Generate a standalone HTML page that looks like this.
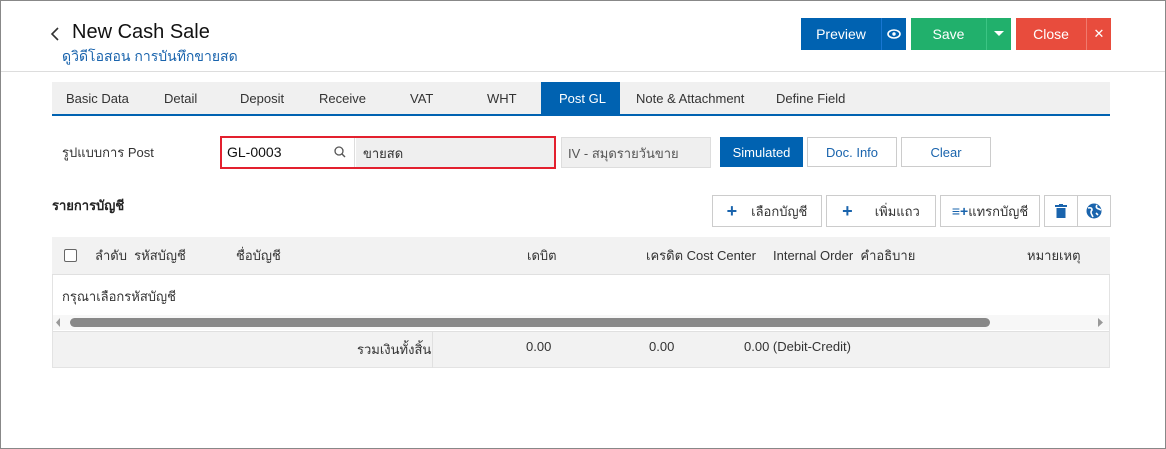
<!DOCTYPE html>
<html><head><meta charset="utf-8"><style>
*{box-sizing:border-box;margin:0;padding:0}
body{width:1166px;height:449px;background:#fff;font-family:"Liberation Sans","Noto Sans CJK SC",sans-serif;font-size:13px;color:#333;position:relative;overflow:hidden}
.frame{position:absolute;left:0;top:0;width:1166px;height:449px;border:1px solid #888}
.a{position:absolute}
.btn{position:absolute;display:flex;align-items:center;justify-content:center;color:#fff;font-size:14px}
.wb{position:absolute;border:1px solid #ccc;background:#fff;display:flex;align-items:center;justify-content:center;color:#1a64ad;font-size:13px}
.tab{position:absolute;top:82px;height:34px;line-height:34px;font-size:13px;color:#333}
</style></head><body>
<div class="frame"></div>
<svg class="a" style="left:50px;top:27px" width="10" height="14"><path d="M8 1 L2 7 L8 13" stroke="#333" stroke-width="1.6" fill="none"/></svg>
<div class="a" style="left:72px;top:21px;font-size:20px;color:#111">New Cash Sale</div>
<div class="a" style="left:62px;top:46px;font-size:14px;color:#1a64ad">ดูวิดีโอสอน การบันทึกขายสด</div>
<div class="a" style="left:1px;top:71px;width:1164px;height:1px;background:#ddd"></div>

<div class="btn" style="left:801px;top:18px;width:80px;height:32px;background:#0062b1">Preview</div>
<div class="btn" style="left:881px;top:18px;width:25px;height:32px;background:#0062b1;border-left:1px solid #1976d2"><svg width="14" height="10"><ellipse cx="7" cy="5" rx="6" ry="4" fill="none" stroke="#fff" stroke-width="1.6"/><circle cx="7" cy="5" r="1.7" fill="#fff"/></svg></div>
<div class="btn" style="left:911px;top:18px;width:75px;height:32px;background:#21b06c">Save</div>
<div class="btn" style="left:986px;top:18px;width:25px;height:32px;background:#21b06c;border-left:1px solid #3cc484"><svg width="10" height="6"><path d="M0 0H10L5 5Z" fill="#fff"/></svg></div>
<div class="btn" style="left:1016px;top:18px;width:70px;height:32px;background:#e84c3d">Close</div>
<div class="btn" style="left:1086px;top:18px;width:25px;height:32px;background:#e84c3d;border-left:1px solid #f07a6e;font-size:13px">✕</div>

<div class="a" style="left:52px;top:82px;width:1058px;height:34px;background:#f0f0f0;border-bottom:2px solid #0062b1"></div>
<div class="a" style="left:541px;top:82px;width:79px;height:34px;background:#0062b1"></div>
<div class="tab" style="left:66px">Basic Data</div>
<div class="tab" style="left:164px">Detail</div>
<div class="tab" style="left:240px">Deposit</div>
<div class="tab" style="left:319px">Receive</div>
<div class="tab" style="left:410px">VAT</div>
<div class="tab" style="left:487px">WHT</div>
<div class="tab" style="left:559px;color:#fff">Post GL</div>
<div class="tab" style="left:636px">Note &amp; Attachment</div>
<div class="tab" style="left:776px">Define Field</div>

<div class="a" style="left:62px;top:142px">รูปแบบการ Post</div>
<div class="a" style="left:220px;top:136px;width:336px;height:33px;border:2px solid #e3202e"></div>
<div class="a" style="left:222px;top:138px;width:133px;height:29px;background:#fff;border-right:1px solid #ddd;padding:6px 5px;font-size:14px;color:#111">GL-0003</div>
<svg class="a" style="left:334px;top:146px" width="12" height="12"><circle cx="5" cy="5" r="4" fill="none" stroke="#555" stroke-width="1.3"/><path d="M8 8L11 11" stroke="#555" stroke-width="1.4"/></svg>
<div class="a" style="left:356px;top:138px;width:198px;height:29px;background:#efefef;padding:5px 7px">ขายสด</div>
<div class="a" style="left:561px;top:137px;width:150px;height:31px;background:#efefef;border:1px solid #ddd;padding:5px 6px;color:#555">IV - สมุดรายวันขาย</div>
<div class="btn" style="left:720px;top:137px;width:83px;height:30px;background:#0062b1;font-size:13px">Simulated</div>
<div class="wb" style="left:807px;top:137px;width:90px;height:30px">Doc. Info</div>
<div class="wb" style="left:901px;top:137px;width:90px;height:30px">Clear</div>

<div class="a" style="left:52px;top:195px;font-weight:bold;color:#222">รายการบัญชี</div>
<div class="wb" style="left:712px;top:195px;width:110px;height:32px;color:#333"><b style="color:#1a64ad;font-size:18px;margin-right:14px">+</b>เลือกบัญชี</div>
<div class="wb" style="left:826px;top:195px;width:110px;height:32px;color:#333"><b style="color:#1a64ad;font-size:18px;margin-right:22px">+</b>เพิ่มแถว</div>
<div class="wb" style="left:940px;top:195px;width:100px;height:32px;color:#333"><b style="color:#1a64ad;font-size:14px">≡+</b>แทรกบัญชี</div>
<div class="wb" style="left:1044px;top:195px;width:34px;height:32px"><svg width="12" height="14"><rect x="0" y="1" width="12" height="2" fill="#1a64ad"/><rect x="4" y="0" width="4" height="2" fill="#1a64ad"/><rect x="1.5" y="4" width="9" height="10" fill="#1a64ad"/></svg></div>
<div class="wb" style="left:1077px;top:195px;width:34px;height:32px"><svg width="16" height="16"><circle cx="8" cy="8" r="7.5" fill="#1a64ad"/><path d="M2 5 Q6 4 6 7 Q4 9 6 12 L7 14 M11 2 Q9 5 13 6 L15 7 M10 10 L12 12" stroke="#fff" stroke-width="1.6" fill="none"/></svg></div>

<div class="a" style="left:52px;top:237px;width:1058px;height:131px;border:1px solid #e3e3e3"></div>
<div class="a" style="left:52px;top:237px;width:1058px;height:38px;background:#f2f2f2;border-bottom:1px solid #e0e0e0"></div>
<div class="a" style="left:64px;top:249px;width:13px;height:13px;border:1px solid #666;border-radius:2px;background:#fff"></div>
<div class="a" style="left:95px;top:245px">ลำดับ&nbsp; รหัสบัญชี</div>
<div class="a" style="left:236px;top:245px">ชื่อบัญชี</div>
<div class="a" style="left:527px;top:245px">เดบิต</div>
<div class="a" style="left:646px;top:245px">เครดิต Cost Center</div>
<div class="a" style="left:773px;top:245px">Internal Order&nbsp; คำอธิบาย</div>
<div class="a" style="left:1027px;top:245px">หมายเหตุ</div>
<div class="a" style="left:62px;top:286px">กรุณาเลือกรหัสบัญชี</div>
<div class="a" style="left:53px;top:315px;width:1056px;height:15px;background:#f7f7f7"></div>
<div class="a" style="left:70px;top:318px;width:920px;height:9px;background:#888;border-radius:5px"></div>
<svg class="a" style="left:56px;top:318px" width="5" height="9"><path d="M4 0V9L0 4.5Z" fill="#999"/></svg>
<svg class="a" style="left:1098px;top:318px" width="5" height="9"><path d="M0 0V9L5 4.5Z" fill="#999"/></svg>
<div class="a" style="left:53px;top:331px;width:1056px;height:36px;background:#f2f2f2;border-top:1px solid #e0e0e0"></div>
<div class="a" style="left:432px;top:331px;width:1px;height:37px;background:#e0e0e0"></div>
<div class="a" style="left:357px;top:339px">รวมเงินทั้งสิ้น</div>
<div class="a" style="left:526px;top:339px">0.00</div>
<div class="a" style="left:649px;top:339px">0.00</div>
<div class="a" style="left:744px;top:339px">0.00 (Debit-Credit)</div>
</body></html>
